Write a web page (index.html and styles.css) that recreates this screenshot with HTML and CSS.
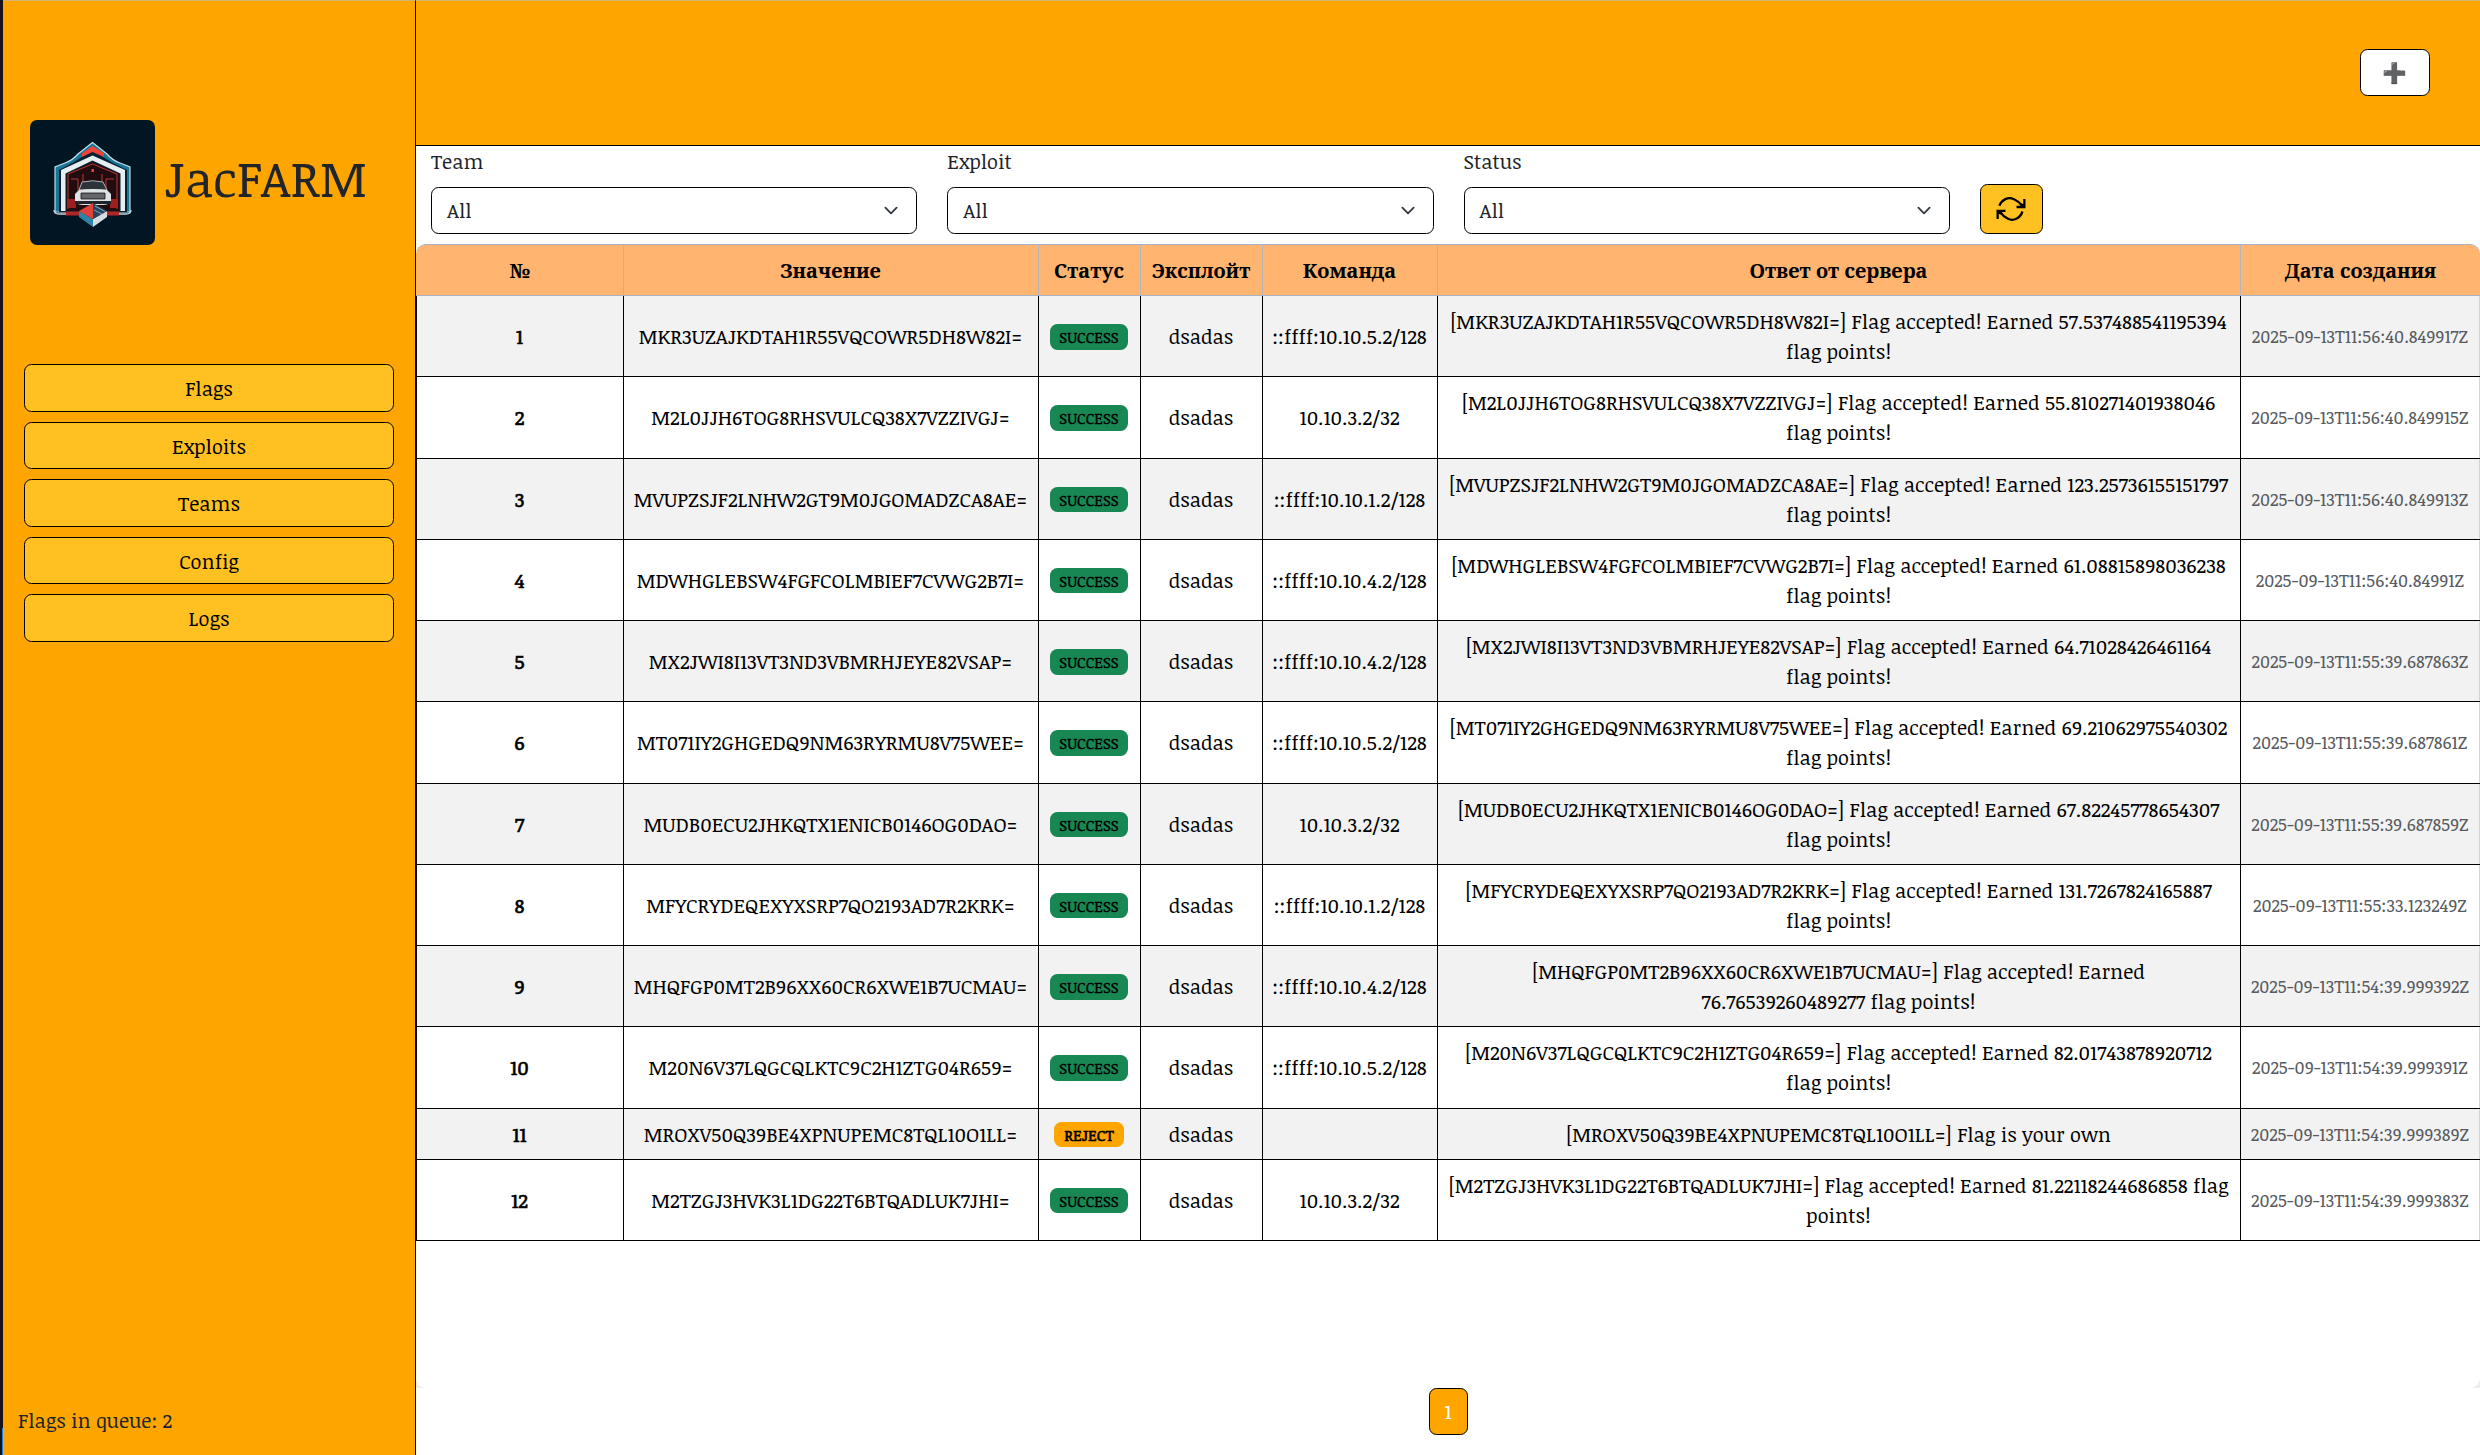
FILE: index.html
```html
<!DOCTYPE html>
<html lang="ru">
<head>
<meta charset="utf-8">
<title>JacFARM</title>
<link rel="stylesheet" href="styles.css">
</head>
<body>
<div class="app">
  <div class="edge"><div class="edge-mark"></div></div>
  <aside class="sidebar">
    <div class="brand">
      <svg class="logo" viewBox="0 0 125 125">
        <rect width="125" height="125" fill="#021523"/>
        <path d="M24 90q0 4 5 4h67q5 0 5-4" fill="none" stroke="#c5d3dc" stroke-width="1.3"/>
        <path d="M25 92V47l10-4q8-3 13-9L62.500 22.500 77 34q5 6 13 9l10 4v45z" fill="#1b7696" stroke="#bfe0ea" stroke-width="1.200"/>
        <path d="M29 92V50l15-8 18.500-12L81 42l16 8v42z" fill="#06202f"/>
        <path d="M52 37V33l10.500-7L74 33v4l-11.500-5z" fill="#ef4339"/>
        <path d="M31 91V50l31.500-14.500L95 50v41h-4.500V53.500L62.500 40.500 35.500 53.500V91z" fill="#e6eef2"/>
        <path d="M36.500 91V54l26-12L89 54v37z" fill="#220c10"/>
        <path d="M38 89V54l24.500-10L87 54v35M41 59h7v17M84 59h-8v17M53 66V54M72 66V54" fill="none" stroke="#b83a32" stroke-width="1"/>
        <path d="M61.500 49h2.500v3h-2.500z" fill="#d9483c"/>
        <path d="M37 79h9v9h-9zM80 79h8v9h-8z" fill="#9e1f20"/>
        <path d="M36 91.500h53v4H36z" fill="#b02626"/>
        <path d="M49 70l3-8q11-2.500 21 0l4 8z" fill="#2c3339" stroke="#aab4ba" stroke-width="1"/>
        <path d="M45 74l4-4q14-2 28 0l4 4v8q-3 3-8 3H53q-5 0-8-3z" fill="#dde2e5"/>
        <path d="M51 73h24v6H51z" fill="#54565a" stroke="#222" stroke-width=".8"/>
        <path d="M52 75h22M52 77h22" stroke="#999" stroke-width=".5"/>
        <path d="M45 81h36v3H45z" fill="#20242a"/>
        <path d="M49 91l14 8v8L49 97z" fill="#2f83a5"/>
        <path d="M77 91l-14 8v8l14-10z" fill="#d3dde2"/>
        <path d="M49 91l14-8v16z" fill="#e0413b"/>
        <path d="M77 91l-14-8v16z" fill="#23465c"/>
        <path d="M65 86l10 5.500M64 90l8 4" stroke="#9fbfce" stroke-width=".8"/>
      </svg>
      <span class="brand-name">JacFARM</span>
    </div>
    <nav class="menu">
      <a>Flags</a><a>Exploits</a><a>Teams</a><a>Config</a><a>Logs</a>
    </nav>
    <div class="queue">Flags in queue: 2</div>
  </aside>
  <main class="main">
    <header class="topbar">
      <button class="add" aria-label="Add">➕</button>
    </header>
    <section class="filters">
      <div class="field"><label>Team</label><div class="select"><span>All</span><svg class="chev" viewBox="0 0 16 16"><path d="m2 5 6 6 6-6"/></svg></div></div>
      <div class="field"><label>Exploit</label><div class="select"><span>All</span><svg class="chev" viewBox="0 0 16 16"><path d="m2 5 6 6 6-6"/></svg></div></div>
      <div class="field"><label>Status</label><div class="select"><span>All</span><svg class="chev" viewBox="0 0 16 16"><path d="m2 5 6 6 6-6"/></svg></div></div>
      <button class="refresh" aria-label="Refresh">
        <svg viewBox="0 0 30 26"><path d="M3.300 9.800C6 3.500 12 .500 18 3.200Q23 5.500 26 9.500M26.500 15.500C24 22.500 17.500 25.500 12 22.800Q7 20.500 4 15.500" fill="none" stroke="#000" stroke-width="2.300"/><path d="M27.200 3H29.500V12.300H20.500V9.800H24.500L25 7.500 27.200 8zM.500 23V13.700H9.500V16H5.500L5 18.500 2.800 18V23z"/></svg>
      </button>
    </section>
    <section class="list">
      <div class="table" role="table">
        <div class="row head"><b>№</b><b>Значение</b><b>Статус</b><b>Эксплойт</b><b>Команда</b><b>Ответ от сервера</b><b>Дата создания</b></div>
        <div class="row"><span class="num">1</span><span>MKR3UZAJKDTAH1R55VQCOWR5DH8W82I=</span><span><i class="badge">SUCCESS</i></span><span>dsadas</span><span>::ffff:10.10.5.2/128</span><span>[MKR3UZAJKDTAH1R55VQCOWR5DH8W82I=] Flag accepted! Earned 57.537488541195394<br>flag points!</span><span class="date">2025-09-13T11:56:40.849917Z</span></div>
        <div class="row"><span class="num">2</span><span>M2L0JJH6TOG8RHSVULCQ38X7VZZIVGJ=</span><span><i class="badge">SUCCESS</i></span><span>dsadas</span><span>10.10.3.2/32</span><span>[M2L0JJH6TOG8RHSVULCQ38X7VZZIVGJ=] Flag accepted! Earned 55.810271401938046<br>flag points!</span><span class="date">2025-09-13T11:56:40.849915Z</span></div>
        <div class="row"><span class="num">3</span><span>MVUPZSJF2LNHW2GT9M0JGOMADZCA8AE=</span><span><i class="badge">SUCCESS</i></span><span>dsadas</span><span>::ffff:10.10.1.2/128</span><span>[MVUPZSJF2LNHW2GT9M0JGOMADZCA8AE=] Flag accepted! Earned 123.25736155151797<br>flag points!</span><span class="date">2025-09-13T11:56:40.849913Z</span></div>
        <div class="row"><span class="num">4</span><span>MDWHGLEBSW4FGFCOLMBIEF7CVWG2B7I=</span><span><i class="badge">SUCCESS</i></span><span>dsadas</span><span>::ffff:10.10.4.2/128</span><span>[MDWHGLEBSW4FGFCOLMBIEF7CVWG2B7I=] Flag accepted! Earned 61.08815898036238<br>flag points!</span><span class="date">2025-09-13T11:56:40.84991Z</span></div>
        <div class="row"><span class="num">5</span><span>MX2JWI8I13VT3ND3VBMRHJEYE82VSAP=</span><span><i class="badge">SUCCESS</i></span><span>dsadas</span><span>::ffff:10.10.4.2/128</span><span>[MX2JWI8I13VT3ND3VBMRHJEYE82VSAP=] Flag accepted! Earned 64.71028426461164<br>flag points!</span><span class="date">2025-09-13T11:55:39.687863Z</span></div>
        <div class="row"><span class="num">6</span><span>MT071IY2GHGEDQ9NM63RYRMU8V75WEE=</span><span><i class="badge">SUCCESS</i></span><span>dsadas</span><span>::ffff:10.10.5.2/128</span><span>[MT071IY2GHGEDQ9NM63RYRMU8V75WEE=] Flag accepted! Earned 69.21062975540302<br>flag points!</span><span class="date">2025-09-13T11:55:39.687861Z</span></div>
        <div class="row"><span class="num">7</span><span>MUDB0ECU2JHKQTX1ENICB0146OG0DAO=</span><span><i class="badge">SUCCESS</i></span><span>dsadas</span><span>10.10.3.2/32</span><span>[MUDB0ECU2JHKQTX1ENICB0146OG0DAO=] Flag accepted! Earned 67.82245778654307<br>flag points!</span><span class="date">2025-09-13T11:55:39.687859Z</span></div>
        <div class="row"><span class="num">8</span><span>MFYCRYDEQEXYXSRP7QO2193AD7R2KRK=</span><span><i class="badge">SUCCESS</i></span><span>dsadas</span><span>::ffff:10.10.1.2/128</span><span>[MFYCRYDEQEXYXSRP7QO2193AD7R2KRK=] Flag accepted! Earned 131.7267824165887<br>flag points!</span><span class="date">2025-09-13T11:55:33.123249Z</span></div>
        <div class="row"><span class="num">9</span><span>MHQFGP0MT2B96XX60CR6XWE1B7UCMAU=</span><span><i class="badge">SUCCESS</i></span><span>dsadas</span><span>::ffff:10.10.4.2/128</span><span>[MHQFGP0MT2B96XX60CR6XWE1B7UCMAU=] Flag accepted! Earned<br>76.76539260489277 flag points!</span><span class="date">2025-09-13T11:54:39.999392Z</span></div>
        <div class="row"><span class="num">10</span><span>M20N6V37LQGCQLKTC9C2H1ZTG04R659=</span><span><i class="badge">SUCCESS</i></span><span>dsadas</span><span>::ffff:10.10.5.2/128</span><span>[M20N6V37LQGCQLKTC9C2H1ZTG04R659=] Flag accepted! Earned 82.01743878920712<br>flag points!</span><span class="date">2025-09-13T11:54:39.999391Z</span></div>
        <div class="row single"><span class="num">11</span><span>MROXV50Q39BE4XPNUPEMC8TQL10O1LL=</span><span><i class="badge reject">REJECT</i></span><span>dsadas</span><span></span><span>[MROXV50Q39BE4XPNUPEMC8TQL10O1LL=] Flag is your own</span><span class="date">2025-09-13T11:54:39.999389Z</span></div>
        <div class="row"><span class="num">12</span><span>M2TZGJ3HVK3L1DG22T6BTQADLUK7JHI=</span><span><i class="badge">SUCCESS</i></span><span>dsadas</span><span>10.10.3.2/32</span><span>[M2TZGJ3HVK3L1DG22T6BTQADLUK7JHI=] Flag accepted! Earned 81.22118244686858 flag<br>points!</span><span class="date">2025-09-13T11:54:39.999383Z</span></div>
      </div>
    </section>
    <footer class="pager"><a class="page">1</a></footer>
  </main>
</div>
</body>
</html>
```
FILE: styles.css
```css
* { box-sizing: border-box; }
body {
  margin: 0;
  font: 20px/30px "Noticia Text", "Noto Serif", serif;
  color: #212529;
  background: #fff;
}
button { font: inherit; padding: 0; }
.app { display: flex; height: 1455px; overflow: hidden; }

.edge { flex: 0 0 3px; background: #17131c; display: flex; align-items: flex-end; justify-content: flex-end; }
.edge-mark { width: 1px; height: 27px; background: #1a86e0; }

.sidebar {
  flex: 0 0 413px;
  display: flex;
  flex-direction: column;
  background: #ffa500;
  border-right: 1px solid #000;
  border-top: 1px solid #d3b277;
  padding: 119px 21px 20px 15px;
}
.brand { display: flex; align-items: center; height: 125px; padding-left: 12px; gap: 9px; }
.logo { width: 125px; height: 125px; border-radius: 7px; }
.brand-name { font-size: 50px; line-height: 60px; padding-bottom: 12px; }
.menu { display: flex; flex-direction: column; gap: 10px; margin: 119.25px 0 0 6px; }
.menu a {
  height: 47.5px;
  display: flex;
  align-items: center;
  justify-content: center;
  background: #ffc121;
  border: 1px solid #000;
  border-radius: 7.5px;
  color: #000;
}
.queue { margin-top: auto; }

.main { flex: 1; min-width: 0; display: flex; flex-direction: column; }
.topbar {
  flex: 0 0 146px;
  display: flex;
  align-items: center;
  justify-content: flex-end;
  padding: 0 50px 2px 0;
  background: #ffa500;
  border-top: 1px solid #d3b277;
  border-bottom: 1px solid #000;
}
.add { width: 70px; height: 47px; padding-right: 1px; background: #fff; border: 1px solid #000; border-radius: 7.5px; }

.filters { flex: 0 0 98px; display: flex; align-items: flex-end; gap: 30px; padding: 0 15px 10px; }
.field { width: 486.25px; }
.field label { display: block; margin-bottom: 10.5px; }
.select {
  height: 47.5px;
  display: flex;
  align-items: center;
  justify-content: space-between;
  padding: 0 15px 0 15px;
  border: 1px solid #000;
  border-radius: 7.5px;
}
.chev { width: 20px; height: 15px; fill: none; stroke: #343a40; stroke-width: 2; stroke-linecap: round; stroke-linejoin: round; }
.refresh {
  width: 63px;
  height: 50px;
  display: flex;
  align-items: center;
  justify-content: center;
  background: #ffc121;
  border: 1px solid #000;
  border-radius: 7.5px;
}
.refresh svg { width: 30px; height: 26px; }

.list { flex: 0 0 1143.5px; background: linear-gradient(#fff 50%, #ededed 50%); }
.table { height: 100%; background: #fff; border-radius: 0 0 10px 10px; color: #000; }
.row {
  display: grid;
  grid-template-columns: 207px 415px 102px 122px 175px 803px 240px;
  height: 81.25px;
  border-bottom: 1px solid #000;
}
.row > * {
  display: flex;
  align-items: center;
  justify-content: center;
  padding-right: 1px;
  text-align: center;
  white-space: nowrap;
  border-left: 1px solid #000;
}
.row > :last-child { padding-right: 0; border-right: 1px solid #d5d5d5; }
.row:nth-child(even) { background: #f2f2f2; }
.row.single { height: 51.25px; }
.row.head {
  height: 52px;
  background: #ffb570;
  border: 1px solid #a9b4c8;
  border-width: 1px 0;
  border-radius: 10px 10px 0 0;
}
.row.head > * { padding-bottom: 1px; border-color: #b3b4b8; }
.row.head > :first-child { border-left-color: transparent; }
.row.head > :last-child { border-right: 0; }
.row > .num { -webkit-text-stroke: 0.6px #000; }
.date { font-size: 17.5px; color: #585b5f; }
.badge {
  margin-top: 1.5px;
  font-style: normal;
  font-size: 15px;
  line-height: 15px;
  padding: 6px 9.75px 4.5px;
  border-radius: 7.5px;
  background: #198754;
  -webkit-text-stroke: 0.3px #000;
}
.badge.reject { background: #ffa500; -webkit-text-stroke-width: 0.6px; }

.pager { display: flex; justify-content: center; }
.page {
  width: 39px;
  height: 47px;
  display: flex;
  align-items: center;
  justify-content: center;
  background: #ffa500;
  border: 1px solid #000;
  border-radius: 7.5px;
  color: #fff;
}
```
